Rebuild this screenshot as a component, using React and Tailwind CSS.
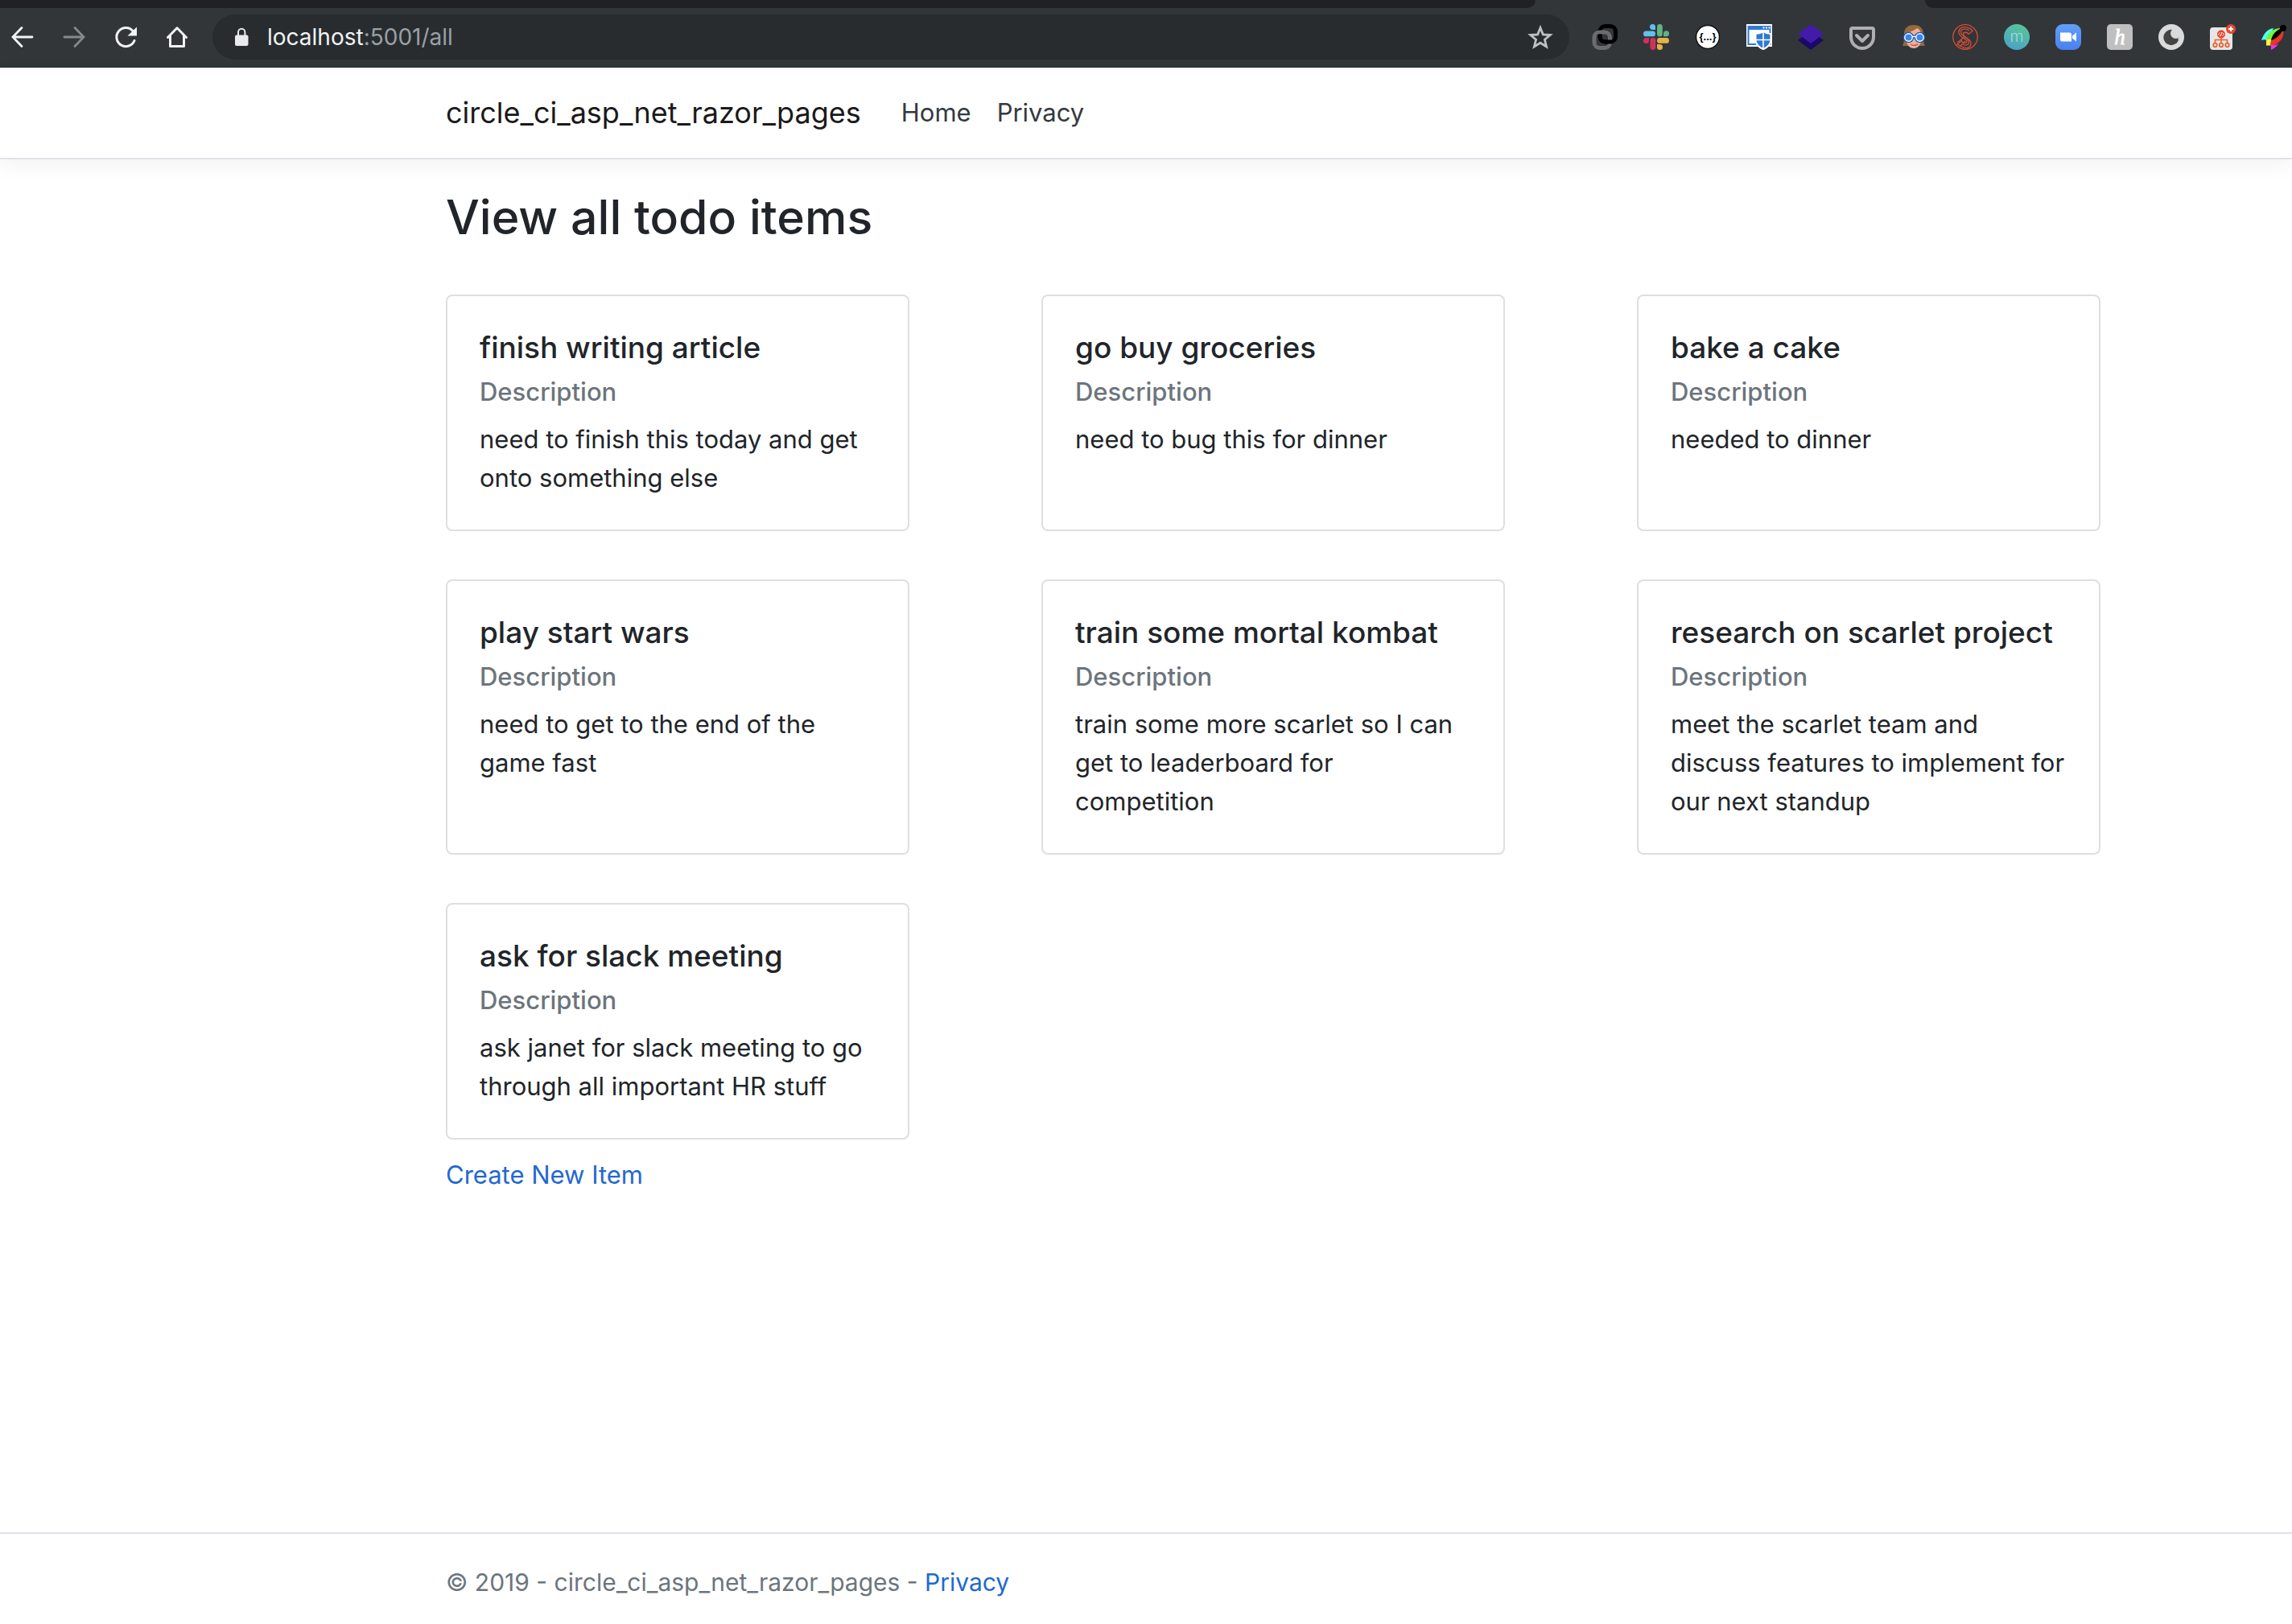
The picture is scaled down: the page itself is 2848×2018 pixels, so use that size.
import React from "react";

function ToolButton({ label, className = "", children }) {
  return (
    <button type="button" aria-label={label} className={`size-8 shrink-0 ${className}`}>
      <svg viewBox="0 0 32 32" className="size-8" fill="none">
        {children}
      </svg>
    </button>
  );
}

const extensions = [
  {
    label: "Link chains",
    art: (
      <>
        <rect x="10" y="2.500" width="19.500" height="19.500" rx="6.500" stroke="#000" strokeWidth="5" />
        <rect x="3" y="10" width="19.500" height="19.500" rx="6.500" stroke="#6b6c70" strokeWidth="5" />
        <path d="M10 12.500v3a6.500 6.500 0 0 0 6.500 6.500H25" stroke="#000" strokeWidth="5" />
      </>
    ),
  },
  {
    label: "Slack",
    art: (
      <>
        <path d="M8 3.500a3.500 3.500 0 0 1 7 0V7h-3.500A3.500 3.500 0 0 1 8 3.500z" fill="#5ec1ee" />
        <rect x="0" y="8.500" width="15" height="6.800" rx="3.400" fill="#5ec1ee" />
        <rect x="17" y="0" width="6.800" height="15.300" rx="3.400" fill="#5fb583" />
        <path d="M25 15.300v-3.500a3.500 3.500 0 1 1 3.500 3.500z" fill="#5fb583" />
        <path d="M7 17v3.500A3.500 3.500 0 1 1 3.500 17z" fill="#d4305d" />
        <rect x="8.500" y="17" width="6.800" height="15" rx="3.400" fill="#d4305d" />
        <rect x="17" y="17" width="15" height="6.800" rx="3.400" fill="#e5b24b" />
        <path d="M17 25h3.500a3.500 3.500 0 1 1-3.500 3.500z" fill="#e5b24b" />
      </>
    ),
  },
  {
    label: "JSON viewer",
    art: (
      <>
        <circle cx="16" cy="16" r="14.500" fill="#fff" stroke="#111" strokeWidth="1.500" />
        <text x="16" y="20" textAnchor="middle" fontSize="13" fontWeight="700" fontFamily="Liberation Sans, sans-serif" fill="#000">
          {"{...}"}
        </text>
      </>
    ),
  },
  {
    label: "Window shield",
    art: (
      <>
        <rect width="32" height="28" fill="#fff" />
        <rect x="1.500" y="2" width="29" height="24" fill="#2e7ad3" />
        <rect x="3.500" y="7" width="25" height="17" fill="#fff" />
        <path d="M20.500 3.500h2v2h-2zM24 3.500h2v2h-2zM27.500 3.500h2v2h-2z" fill="#fff" />
        <path d="M21 8c3 2.500 6 3 10.500 3v8c0 6-4 10.500-10.500 13.200C14.500 29.500 10.500 25 10.500 19v-8C15 11 18 10.500 21 8z" fill="#fff" />
        <path d="M21 10c2.500 2 5 2.600 8.500 2.800V19c0 4.500-3 8.500-8.500 11-5.500-2.500-8.500-6.500-8.500-11v-6.200C16 12.600 18.500 12 21 10z" fill="#2e7ad3" />
        <path d="M21 10v20M12 19.500h18" stroke="#fff" strokeWidth="1.600" />
      </>
    ),
  },
  {
    label: "Layers",
    art: (
      <>
        <path d="M16 8l16 12-16 12L0 20z" fill="#190a66" />
        <path d="M16 0l16 12-16 12L0 12z" fill="#421ba9" />
      </>
    ),
  },
  {
    label: "Pocket",
    art: (
      <>
        <path d="M4 5h24a2 2 0 0 1 2 2v9a14 14 0 0 1-28 0V7a2 2 0 0 1 2-2z" stroke="#b0afb0" strokeWidth="4" />
        <path d="M9 14l7 7 7-7" stroke="#b0afb0" strokeWidth="4" strokeLinecap="round" strokeLinejoin="round" />
      </>
    ),
  },
  {
    label: "Avatar with goggles",
    art: (
      <>
        <path d="M4 12C4 4 10 1 16 1s12 3 12 11c0 7 0 11 2 15H2c2-4 2-8 2-15z" fill="#96683d" />
        <path d="M6 15C6 10 14 10 20 5c4 2 6 6 6 11 0 8-4 14-10 14S6 24 6 15z" fill="#f2af97" />
        <path d="M12 25q4 3 9 0" stroke="#b0605a" strokeWidth="1.500" />
        <path d="M13 15.500h6" stroke="#1b56b0" strokeWidth="4" />
        <circle cx="9.500" cy="16.500" r="6.800" fill="#1b56b0" />
        <circle cx="23.500" cy="16.500" r="6.800" fill="#1b56b0" />
        <circle cx="9.500" cy="16.500" r="5.400" fill="#fff" />
        <circle cx="23.500" cy="16.500" r="5.400" fill="#fff" />
        <path d="M13 15.500h6" stroke="#fff" strokeWidth="1.500" />
        <circle cx="9.500" cy="16.500" r="4" fill="#3b86ee" />
        <circle cx="23.500" cy="16.500" r="4" fill="#3b86ee" />
      </>
    ),
  },
  {
    label: "Emblem",
    art: (
      <g stroke="#d34e37" strokeWidth="1.300">
        <circle cx="16" cy="16" r="15.300" />
        <path d="M25 8.500l-5 4c-1-3-6.500-3-6.500 0 0 4 9.500 5 9.500 11.500 0 5-6 7-10 4.500L6 25l5.500-4.500c.5 3 6.500 4 6.500 1 0-4-9.500-4-10-11.500C7.800 5 13 2.500 17.500 4c1.500.5 3 1.500 4.500 1z" />
        <path d="M21 8c-4-3-10-2.500-10.500 1.500C10 15 20.500 16 20.500 22.500c0 3.500-4.500 4.500-7.500 2.500M6 23l10-8M9 28l7-7" />
      </g>
    ),
  },
  {
    label: "Gradient circle",
    art: (
      <>
        <defs>
          <linearGradient id="teal" x1="0.700" y1="0" x2="0.300" y2="1">
            <stop stopColor="#5ac498" />
            <stop offset="1" stopColor="#49a3c8" />
          </linearGradient>
        </defs>
        <circle cx="16" cy="16" r="16" fill="url(#teal)" />
        <text x="16" y="22" textAnchor="middle" fontSize="21" fontWeight="300" fontFamily="Lato, sans-serif" fill="#b5e5dc">
          m
        </text>
      </>
    ),
  },
  {
    label: "Zoom",
    art: (
      <>
        <defs>
          <linearGradient id="sky" x1="0" y1="0" x2="0" y2="1">
            <stop stopColor="#629ff8" />
            <stop offset="1" stopColor="#4a80ef" />
          </linearGradient>
        </defs>
        <rect width="32" height="32" rx="9" fill="url(#sky)" />
        <path d="M6 10.500h11.500a2.500 2.500 0 0 1 2.500 2.500v8.500H8.500A2.500 2.500 0 0 1 6 19zM21 14.500l5-4v11l-5-4z" fill="#fff" />
      </>
    ),
  },
  {
    label: "Honey",
    art: (
      <>
        <rect width="32" height="32" rx="5" fill="#bfbfbf" />
        <text x="16" y="25" textAnchor="middle" fontSize="27" fontStyle="italic" fontFamily="Liberation Serif, serif" fill="#fff" stroke="#fff" strokeWidth="0.800">
          h
        </text>
      </>
    ),
  },
  {
    label: "Night mode",
    art: (
      <>
        <circle cx="16" cy="16" r="16" fill="#dadada" />
        <circle cx="16" cy="16.500" r="9.700" fill="#434343" />
        <circle cx="21.500" cy="11.500" r="6.500" fill="#dadada" />
        <path d="M17 7c0 3 1 4 3 3l6 6c-2 1-2 3-1 4l4-8-6-7z" fill="#dadada" />
      </>
    ),
  },
  {
    label: "Code tree",
    art: (
      <>
        <rect y="4" width="28" height="28" rx="4" fill="#e6e6e6" />
        <path d="M14 16v8M6.500 24v-4.500h15V24" stroke="#e8632f" strokeWidth="1.600" />
        <circle cx="14" cy="12.500" r="5" fill="#e0452f" />
        <path d="M12.500 10.500l-2 2 2 2M15.500 10.500l2 2-2 2M14.600 10l-1.200 5" stroke="#fff" strokeWidth="0.900" />
        <g stroke="#e8632f" strokeWidth="1.700" fill="#e6e6e6">
          <circle cx="6.500" cy="26" r="2.300" />
          <circle cx="14" cy="26" r="2.300" />
          <circle cx="21.500" cy="26" r="2.300" />
        </g>
        <circle cx="26" cy="6" r="6" fill="#e5482e" />
        <path d="M26 3v6M23 6h6" stroke="#fff" strokeWidth="2.200" />
      </>
    ),
  },
  {
    label: "Colour bird",
    art: (
      <>
        <path d="M0 20C3 11 8 6 15 5L8 20c-3-1-6-1-8 0z" fill="#5ff" />
        <path d="M6 20C6 11 14 5 27 4.500L13 20z" fill="#6ff542" />
        <path d="M6 19h7v7.500H6z" fill="#fcf53f" />
        <path d="M27 5c2 9-2 17-11 21-3 1-5 .5-5 .5 0-4 1-6 2-8z" fill="#ec3323" />
        <path d="M6 19c3-1 5 0 7 1.500l3-2-3-5z" fill="#6ff542" />
        <path d="M12 20.500C13 13 18 7 27 4.500c-1 6-6 12-15 16z" fill="#000" />
        <path d="M12 25c3 2 6 1.500 9-1-1 3-5 6.500-9 8z" fill="#ea33f7" />
        <circle cx="27" cy="5" r="4" fill="#000" />
      </>
    ),
  },
];

function BrowserBar() {
  return (
    <div className="border-b border-[#202124] bg-[#323639]">
      <div className="flex h-[10px] justify-between">
        <div className="w-[67%] rounded-br-2xl bg-[#202124]" />
        <div className="w-[16%] rounded-bl-2xl bg-[#202124]" />
      </div>
      <div className="flex h-[73px] items-center pb-px pl-3 pr-[6px]">
        <div className="flex gap-8">
          <ToolButton label="Back">
            <path d="M28 16H4M15 4.500L4 16l11 11.500" stroke="#f1f3f4" strokeWidth="2.800" strokeLinecap="round" />
          </ToolButton>
          <ToolButton label="Forward">
            <path d="M4 16h24M17 4.500L28 16 17 27.500" stroke="#86898b" strokeWidth="2.800" strokeLinecap="round" />
          </ToolButton>
          <ToolButton label="Reload">
            <path d="M27 20.500A11.500 11.500 0 1 1 25 8.500" stroke="#f1f3f4" strokeWidth="3" strokeLinecap="round" />
            <path d="M30 3.500v11H18.500z" fill="#f1f3f4" />
          </ToolButton>
          <ToolButton label="Home">
            <path d="M4.500 16.500L16 4.800l11.500 11.700M7.500 14.500V27.500h17V14.500" stroke="#f1f3f4" strokeWidth="3" strokeLinecap="round" strokeLinejoin="round" />
          </ToolButton>
        </div>
        <div className="mx-7 flex h-14 flex-1 items-center rounded-full bg-[#282c2f] pl-5 pr-5">
          <svg viewBox="0 0 32 32" className="size-8" aria-hidden="true" fill="none">
            <rect x="8" y="13.500" width="16.500" height="13.500" rx="2" fill="#e8eaed" />
            <path d="M12 14v-4a4.200 4.200 0 0 1 8.400 0v4" stroke="#e8eaed" strokeWidth="2" />
          </svg>
          <p className="ml-4 flex-1 text-[28px] leading-8 text-[#9aa0a6]">
            <span className="text-[#f1f3f4]">localhost</span>:5001/all
          </p>
          <ToolButton label="Bookmark this page">
            <path
              d="M16 4.500l3.300 8.300 9 .7-6.900 5.800 2.200 8.700L16 23.200 8.400 28l2.200-8.700-6.900-5.800 9-.7z"
              stroke="#bdc1c6"
              strokeWidth="2.800"
            />
          </ToolButton>
        </div>
        <div className="flex gap-8">
          {extensions.map((e) => (
            <ToolButton key={e.label} label={e.label}>
              {e.art}
            </ToolButton>
          ))}
        </div>
      </div>
    </div>
  );
}

const todos = [
  ["finish writing article", "need to finish this today and get onto something else"],
  ["go buy groceries", "need to bug this for dinner"],
  ["bake a cake", "needed to dinner"],
  ["play start wars", "need to get to the end of the game fast"],
  ["train some mortal kombat", "train some more scarlet so I can get to leaderboard for competition"],
  ["research on scarlet project", "meet the scarlet team and discuss features to implement for our next standup"],
  ["ask for slack meeting", "ask janet for slack meeting to go through all important HR stuff"],
];

function TodoCard({ title, text }) {
  return (
    <article className="w-[576px] rounded-lg border-2 border-[#dfdfdf] p-10">
      <h2 className="text-[37px] font-medium leading-[48px]">{title}</h2>
      <h3 className="mb-4 mt-3 text-[31px] font-medium leading-[38px] text-[#6c757d]">Description</h3>
      <p>{text}</p>
    </article>
  );
}

export default function App() {
  return (
    <div className="flex min-h-screen flex-col bg-white font-['Inter','Liberation_Sans',sans-serif] text-[31px] leading-[48px] text-[#212529]">
      <BrowserBar />
      <header className="border-b-2 border-[#dee2e6] shadow-[0_8px_24px_rgba(0,0,0,0.05)]">
        <nav className="ml-[554px] flex h-28 max-w-[2220px] items-center">
          <a href="#" className="mr-[50px] text-[36px] text-[#1a1a1a]">
            circle_ci_asp_net_razor_pages
          </a>
          <a href="#home" className="mr-8 text-[#343a40]">
            Home
          </a>
          <a href="#privacy" className="text-[#343a40]">
            Privacy
          </a>
        </nav>
      </header>
      <main className="ml-[554px] max-w-[2220px] flex-1 pt-9">
        <h1 className="text-[59px] font-medium leading-[72px]">View all todo items</h1>
        <section className="mt-[60px] grid grid-cols-3 gap-y-[60px]">
          {todos.map(([title, text]) => (
            <TodoCard key={title} title={title} text={text} />
          ))}
        </section>
        <a href="#create" className="mt-5 inline-block text-[#2368cf]">
          Create New Item
        </a>
      </main>
      <footer className="border-t-2 border-[#dee2e6] pb-7 pt-9 text-[30px] text-[#6c757d]">
        <p className="ml-[554px]">
          © 2019 - circle_ci_asp_net_razor_pages -{" "}
          <a href="#privacy" className="text-[#2368cf]">
            Privacy
          </a>
        </p>
      </footer>
    </div>
  );
}
